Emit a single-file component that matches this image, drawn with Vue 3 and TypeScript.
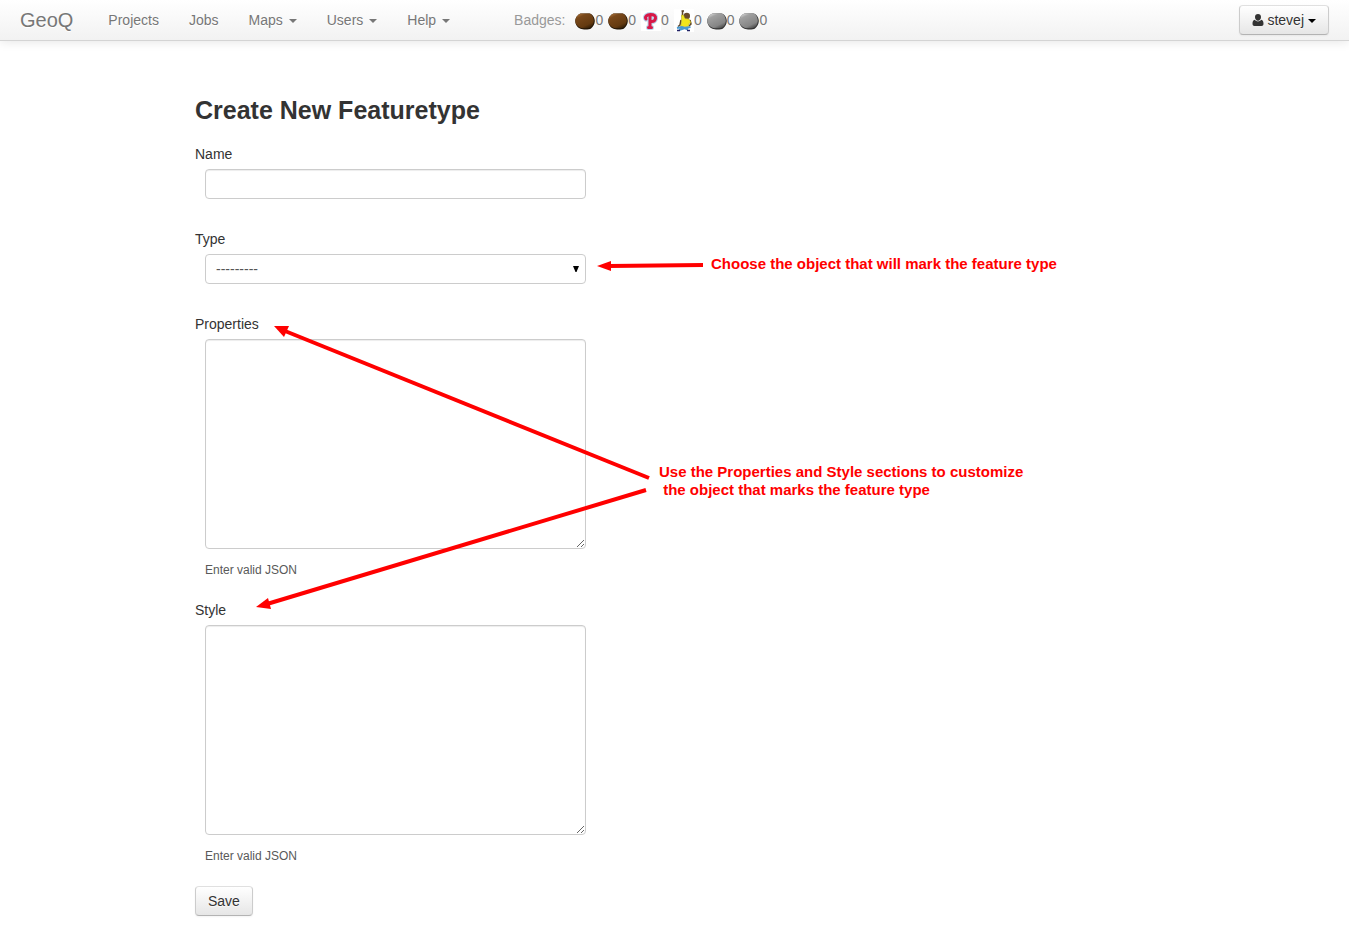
<script setup lang="ts">
import { ref } from 'vue'

interface NavItem {
  label: string
  menu: boolean
}

interface Badge {
  kind: 'brown' | 'grey' | 'letter' | 'figure'
  count: number
}

const navItems: NavItem[] = [
  { label: 'Projects', menu: false },
  { label: 'Jobs', menu: false },
  { label: 'Maps', menu: true },
  { label: 'Users', menu: true },
  { label: 'Help', menu: true },
]

const badges: Badge[] = [
  { kind: 'brown', count: 0 },
  { kind: 'brown', count: 0 },
  { kind: 'letter', count: 0 },
  { kind: 'figure', count: 0 },
  { kind: 'grey', count: 0 },
  { kind: 'grey', count: 0 },
]

const name = ref('')
const featureType = ref('')
const properties = ref('')
const styleJson = ref('')
</script>

<template>
  <header class="navbar">
    <a class="brand" href="#">GeoQ</a>
    <nav class="nav">
      <a v-for="item in navItems" :key="item.label" class="nav-link" href="#">
        {{ item.label }}<span v-if="item.menu" class="caret"></span>
      </a>
    </nav>
    <div class="badges">
      <span class="badges-label">Badges:</span>
      <span v-for="(badge, i) in badges" :key="i" class="badge">
        <svg v-if="badge.kind === 'brown' || badge.kind === 'grey'" class="badge-icon" viewBox="0 0 20 24" aria-hidden="true">
          <defs>
            <linearGradient :id="'stone' + i" x1="0.2" y1="0" x2="0.8" y2="1">
              <template v-if="badge.kind === 'brown'">
                <stop offset="0" stop-color="#a8713a" />
                <stop offset="0.2" stop-color="#79481a" />
                <stop offset="0.75" stop-color="#643a10" />
                <stop offset="1" stop-color="#2c1a05" />
              </template>
              <template v-else>
                <stop offset="0" stop-color="#d6d6d6" />
                <stop offset="0.2" stop-color="#a0a0a0" />
                <stop offset="0.75" stop-color="#858585" />
                <stop offset="1" stop-color="#444444" />
              </template>
            </linearGradient>
          </defs>
          <path
            d="M5.500 5.500H14.500C17 6 19.800 9 19.800 13C19.800 16 18 19 16 20.500C14.500 21.800 8 22 5.500 20.800C3 19.800 .3 17 .3 13C.3 9.500 3 6.500 5.500 5.500Z"
            :fill="badge.kind === 'brown' ? '#211405' : '#333333'"
          />
          <path
            d="M5.500 5.500H14.500C16.500 6 18.800 9 18.800 13C18.500 16.500 17 18.500 15 19.800C12 20.500 8 20.500 5.500 19.800C3 18.800 .3 16 .3 13C.3 9.500 3 6.500 5.500 5.500Z"
            :fill="'url(#stone' + i + ')'"
          />
        </svg>
        <svg v-else-if="badge.kind === 'letter'" class="badge-icon" viewBox="0 0 20 24" aria-hidden="true">
          <rect y="3" width="20" height="20" fill="#fff" />
          <g fill="none" stroke-linecap="round" stroke-linejoin="round">
            <path d="M5 11C3.500 8.500 6 6.500 9.500 6.500C13.500 6.500 15 8 14.500 10.500C14 13 12 13.800 9.500 13.500M9 7V19M7.500 19.500H10.500" stroke="#b7d3ea" stroke-width="5" />
            <path d="M5 11C3.500 8.500 6 6.500 9.500 6.500C13.500 6.500 15 8 14.500 10.500C14 13 12 13.800 9.500 13.500M9 7V19M7.500 19.500H10.500" stroke="#d81848" stroke-width="3" />
          </g>
        </svg>
        <svg v-else class="badge-icon" viewBox="0 0 20 24" aria-hidden="true">
          <rect y="1" width="20" height="23" fill="#fff" />
          <path d="M7 12L6 17L4 18.500M16 12L17 16L15 18" fill="none" stroke="#5e4426" stroke-width="1.500" />
          <path d="M8.500 9L8.500 3M7.500 3H10" fill="none" stroke="#5e4426" stroke-width="1.500" />
          <circle cx="12.800" cy="8" r="3.200" fill="#6a4a28" />
          <path d="M7.500 7H9.500L11 10.500L15 11L17 14.500L15 15.500L14.500 18.500H6.500L7.500 14Z" fill="#f1e51b" stroke="#a89c20" stroke-width=".5" />
          <path d="M3 20L8 19L14 21.500M16.500 19L11 20L5 22" fill="none" stroke="#4a9ad0" stroke-width="2" />
          <path d="M3 22.500H6M13 22.500H16" stroke="#222266" stroke-width="1.500" />
        </svg>{{ badge.count }}
      </span>
    </div>
    <button class="btn user" type="button">
      <svg class="user-icon" viewBox="0 0 11 12" aria-hidden="true">
        <path d="M5.500 0C7.400 0 8.500 1.300 8.500 3C8.500 5 7.300 6.700 5.500 6.700S2.500 5 2.500 3C2.500 1.300 3.600 0 5.500 0ZM2.300 5.800C3.200 7 4.200 7.500 5.500 7.500S7.800 7 8.700 5.800C10.400 6.200 11 7.700 11 9.800C11 11.300 10.200 12 9 12H2C.8 12 0 11.300 0 9.800C0 7.700 .6 6.200 2.300 5.800Z" fill="#333" />
      </svg>
      stevej<span class="caret dark"></span>
    </button>
  </header>

  <main class="page">
    <h1>Create New Featuretype</h1>
    <form @submit.prevent>
      <div class="field">
        <label for="name">Name</label>
        <input id="name" v-model="name" class="control" type="text" />
      </div>
      <div class="field">
        <label for="type">Type</label>
        <div class="select">
          <select id="type" v-model="featureType" class="control">
            <option value="">---------</option>
          </select>
          <svg class="select-arrow" viewBox="0 0 6 6" aria-hidden="true"><path d="M0 0H6L3.500 6H2.500Z" /></svg>
        </div>
      </div>
      <div class="field with-help">
        <label for="properties">Properties</label>
        <textarea id="properties" v-model="properties" class="control" aria-describedby="properties-help"></textarea>
        <p id="properties-help" class="help">Enter valid JSON</p>
      </div>
      <div class="field with-help">
        <label for="style">Style</label>
        <textarea id="style" v-model="styleJson" class="control" aria-describedby="style-help"></textarea>
        <p id="style-help" class="help">Enter valid JSON</p>
      </div>
      <button class="btn" type="submit">Save</button>
    </form>

    <svg class="arrows" viewBox="0 0 480 580" aria-hidden="true">
      <g stroke="#f00" stroke-width="4">
        <path d="M508 224L414 225" />
        <path d="M454 437L90 290" />
        <path d="M451 449L72 563" />
      </g>
      <g fill="#f00">
        <path d="M402 225L416 220V230Z" />
        <path d="M79 285L94 285L89 296Z" />
        <path d="M61 566L73 557L76 568Z" />
      </g>
    </svg>
    <p class="note note-type">Choose the object that will mark the feature type</p>
    <p class="note note-json">Use the Properties and Style sections to customize<br />&nbsp;the object that marks the feature type</p>
  </main>
</template>

<style>
body {
  margin: 0;
  background: #fff;
}
</style>

<style scoped>
.navbar,
.page {
  font: 14px/20px "Liberation Sans", Arial, sans-serif;
  color: #333;
}

.navbar {
  display: flex;
  align-items: center;
  height: 40px;
  padding: 0 20px;
  border-bottom: 1px solid #d4d4d4;
  background: linear-gradient(#fff, #f2f2f2);
  box-shadow: 0 1px 10px rgba(0, 0, 0, 0.1);
}

.brand {
  margin-right: 20px;
  font-size: 20px;
  color: #777;
  text-decoration: none;
  text-shadow: 0 1px 0 #fff;
}

.nav {
  display: flex;
}

.nav-link {
  padding: 10px 15px;
  color: #777;
  text-decoration: none;
  text-shadow: 0 1px 0 #fff;
}

.caret {
  display: inline-block;
  margin-left: 6px;
  border: 4px solid transparent;
  border-top-color: #777;
  border-bottom: 0;
  vertical-align: middle;
}

.caret.dark {
  margin-left: 4px;
  border-top-color: #000;
}

.badges {
  display: flex;
  align-items: center;
  gap: 5px;
  margin-left: 49px;
  color: #777;
}

.badges-label {
  margin-right: 5px;
  color: #999;
}

.badge {
  display: flex;
  align-items: center;
}

.badge-icon {
  width: 20px;
  height: 24px;
}

.btn {
  padding: 4px 12px;
  border: 1px solid #ccc;
  border-color: #e0e0e0 #ccc #b3b3b3;
  border-radius: 4px;
  background: linear-gradient(#fff, #e6e6e6);
  box-shadow: inset 0 1px 0 rgba(255, 255, 255, 0.2), 0 1px 2px rgba(0, 0, 0, 0.05);
  font: inherit;
  color: #333;
  text-shadow: 0 1px 1px rgba(255, 255, 255, 0.75);
  cursor: pointer;
}

.user {
  margin-left: auto;
}

.user-icon {
  width: 12px;
  height: 12px;
  vertical-align: -1px;
}

.page {
  position: relative;
  max-width: 959px;
  margin: 0 auto;
  padding: 49px 0 20px;
}

h1 {
  margin: 0 0 14px;
  font-size: 25px;
  line-height: 40px;
  font-weight: bold;
}

.field {
  display: flex;
  flex-direction: column;
  align-items: flex-start;
  margin-bottom: 30px;
}

.with-help {
  margin-bottom: 20px;
}

label {
  margin-bottom: 5px;
}

.control {
  box-sizing: border-box;
  display: block;
  width: 381px;
  height: 30px;
  margin: 0 0 0 10px;
  padding: 4px 6px;
  border: 1px solid #ccc;
  border-radius: 4px;
  background: #fff;
  box-shadow: inset 0 1px 1px rgba(0, 0, 0, 0.075);
  font: inherit;
  color: #555;
}

.select {
  position: relative;
}

select.control {
  appearance: none;
  padding: 4px 10px;
  box-shadow: none;
}

.select-arrow {
  position: absolute;
  top: 12px;
  right: 7px;
  width: 6px;
  height: 6px;
  pointer-events: none;
}

textarea.control {
  height: 210px;
}

.help {
  margin: 11px 0 0 10px;
  font-size: 12px;
  line-height: 20px;
  color: #595959;
}

.arrows {
  position: absolute;
  top: 0;
  left: 0;
  width: 480px;
  height: 580px;
  overflow: visible;
  pointer-events: none;
}

.note {
  position: absolute;
  margin: 0;
  font-size: 15px;
  line-height: 18px;
  font-weight: bold;
  color: #f00;
  white-space: nowrap;
}

.note-type {
  top: 214px;
  left: 516px;
}

.note-json {
  top: 422px;
  left: 464px;
}
</style>
